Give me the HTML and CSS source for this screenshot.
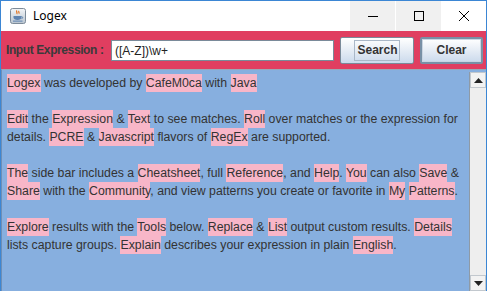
FILE: index.html
```html
<!DOCTYPE html>
<html>
<head>
<meta charset="utf-8">
<link rel="stylesheet" href="styles.css">
</head>
<body>
<div class="window">
  <div class="titlebar">
    <div class="title">
      <svg class="app-icon" width="16" height="16" viewBox="0 0 16 16">
        <defs>
          <linearGradient id="ig" x1="0" y1="0" x2="0" y2="1">
            <stop offset="0" stop-color="#f4f6f8"/>
            <stop offset="1" stop-color="#b9c4cf"/>
          </linearGradient>
        </defs>
        <rect x="0.5" y="0.5" width="15" height="15" rx="2" fill="url(#ig)" stroke="#7d8b99"/>
        <path d="M7 2.5c-1.5 1.2 1 2 -0.3 3.5M9 3c-1 1 0.8 1.5 -0.2 2.6" stroke="#e2731f" stroke-width="1.2" fill="none"/>
        <path d="M3.5 8h8v1.2c0 1.8-1.6 2.8-4 2.8s-4-1-4-2.8z" fill="#5f84b0"/>
        <path d="M11.5 8.6c1.6 0 1.6 2 0 2" stroke="#5f84b0" fill="none"/>
        <rect x="3" y="12.6" width="9.5" height="1" fill="#5f84b0"/>
      </svg>
      <span class="title-text">Logex</span>
    </div>
    <div class="win-buttons">
      <div class="wbtn gray"><svg width="10" height="10" viewBox="0 0 10 10"><path d="M0 5.5h10" stroke="#000" stroke-width="1"/></svg></div>
      <div class="wbtn gray"><svg width="10" height="10" viewBox="0 0 10 10"><rect x="0.5" y="0.5" width="9" height="9" fill="none" stroke="#000"/></svg></div>
      <div class="wbtn"><svg width="10" height="10" viewBox="0 0 10 10"><path d="M0 0L10 10M10 0L0 10" stroke="#000" stroke-width="1"/></svg></div>
    </div>
  </div>
  <div class="toolbar">
    <label class="label">Input Expression :</label>
    <div class="field">([A-Z])\w+</div>
    <button class="btn search"><span class="focus">Search</span></button>
    <button class="btn clear">Clear</button>
  </div>
  <div class="pane">
    <div class="content">
      <p><span class="m">Logex</span> was developed by <span class="m">CafeM0ca</span> with <span class="m">Java</span></p>
      <p>&nbsp;</p>
      <p><span class="m">Edit</span> the <span class="m">Expression</span> &amp; <span class="m">Text</span> to see matches. <span class="m">Roll</span> over matches or the expression for details. <span class="m">PCRE</span> &amp; <span class="m">Javascript</span> flavors of <span class="m">RegEx</span> are supported.</p>
      <p>&nbsp;</p>
      <p><span class="m">The</span> side bar includes a <span class="m">Cheatsheet</span>, full <span class="m">Reference</span>, and <span class="m">Help</span>. <span class="m">You</span> can also <span class="m">Save</span> &amp; <span class="m">Share</span> with the <span class="m">Community</span>, and view patterns you create or favorite in <span class="m">My</span> <span class="m">Patterns</span>.</p>
      <p>&nbsp;</p>
      <p><span class="m">Explore</span> results with the <span class="m">Tools</span> below. <span class="m">Replace</span> &amp; <span class="m">List</span> output custom results. <span class="m">Details</span> lists capture groups. <span class="m">Explain</span> describes your expression in plain <span class="m">English</span>.</p>
    </div>
    <div class="scrollbar">
      <div class="arrow up"><svg width="9" height="5" viewBox="0 0 9 5"><path d="M0 5L4.5 0L9 5z" fill="#222"/></svg></div>
      <div class="track"></div>
      <div class="arrow down"><svg width="9" height="5" viewBox="0 0 9 5"><path d="M0 0L4.5 5L9 0z" fill="#222"/></svg></div>
    </div>
  </div>
</div>
</body>
</html>
```
FILE: styles.css
```css
html, body {
  margin: 0;
  padding: 0;
}
body {
  width: 487px;
  height: 291px;
  overflow: hidden;
  font-family: "Liberation Sans", Arial, sans-serif;
}
.window {
  box-sizing: border-box;
  width: 487px;
  height: 291px;
  border: 1px solid #3b86d4;
  border-bottom: none;
  display: flex;
  flex-direction: column;
  background: #fff;
}
.titlebar {
  height: 30px;
  display: flex;
  justify-content: space-between;
  background: #fff;
}
.title {
  display: flex;
  align-items: center;
  padding-left: 9px;
}
.app-icon {
  display: block;
}
.title-text {
  margin-left: 7px;
  font-family: "Noto Sans", "Liberation Sans", sans-serif;
  font-size: 12px;
  color: #000;
  margin-top: -1px;
}
.win-buttons {
  display: flex;
}
.wbtn {
  width: 45px;
  height: 30px;
  display: flex;
  align-items: center;
  justify-content: center;
}
.wbtn.gray {
  background: #f0f0f0;
  border-left: 1px solid #fff;
}
.toolbar {
  height: 38px;
  background: #e03e60;
  display: flex;
  align-items: center;
  padding-left: 5px;
  padding-right: 3px;
}
.label {
  font-weight: bold;
  font-size: 12px;
  letter-spacing: -0.4px;
  color: #3a3a3a;
  width: 105px;
}
.field {
  box-sizing: border-box;
  width: 223px;
  height: 21px;
  background: #fff;
  border: 1px solid #7a8a99;
  font-size: 12px;
  color: #222;
  padding: 3px 0 0 3px;
}
.btn {
  box-sizing: border-box;
  height: 27px;
  border: 1px solid #7a8a99;
  border-radius: 2px;
  background: linear-gradient(#ffffff, #e8eef6 45%, #cbdaec);
  font-family: "Liberation Sans", Arial, sans-serif;
  font-weight: bold;
  font-size: 12px;
  color: #333;
  padding: 0;
  display: flex;
  align-items: center;
  justify-content: center;
}
.search {
  width: 74px;
  margin-left: 6px;
}
.search .focus {
  border: 1px solid #aab8c8;
  padding: 2px 1px 2px 2px;
  line-height: 15px;
}
.clear {
  width: 63px;
  margin-left: 6px;
  border: 2px solid #7890a6;
  box-shadow: inset 0 0 0 1px #c9d5e2;
}
.pane {
  flex: 1;
  display: flex;
  background: #87afdf;
  border-top: 1px solid #9aa8b6;
  border-left: 1px solid #6f8fb5;
  min-height: 0;
}
.content {
  flex: 1;
  padding: 4px 0 0 5px;
  font-size: 12.3px;
  line-height: 18px;
  color: #333;
}
.content p {
  margin: 0;
}
.m {
  background: #f8b6c8;
  padding: 2px 0;
}
.scrollbar {
  width: 16px;
  display: flex;
  flex-direction: column;
  margin-top: 2px;
  background: #eeeeee;
  border-left: 1px solid #8e9aa6;
}
.arrow {
  height: 16px;
  box-sizing: border-box;
  display: flex;
  align-items: center;
  justify-content: center;
  background: #f2f2f2;
  border: 1px solid #c2c8ce;
}
.track {
  flex: 1;
  background: #eeeeee;
}
```
